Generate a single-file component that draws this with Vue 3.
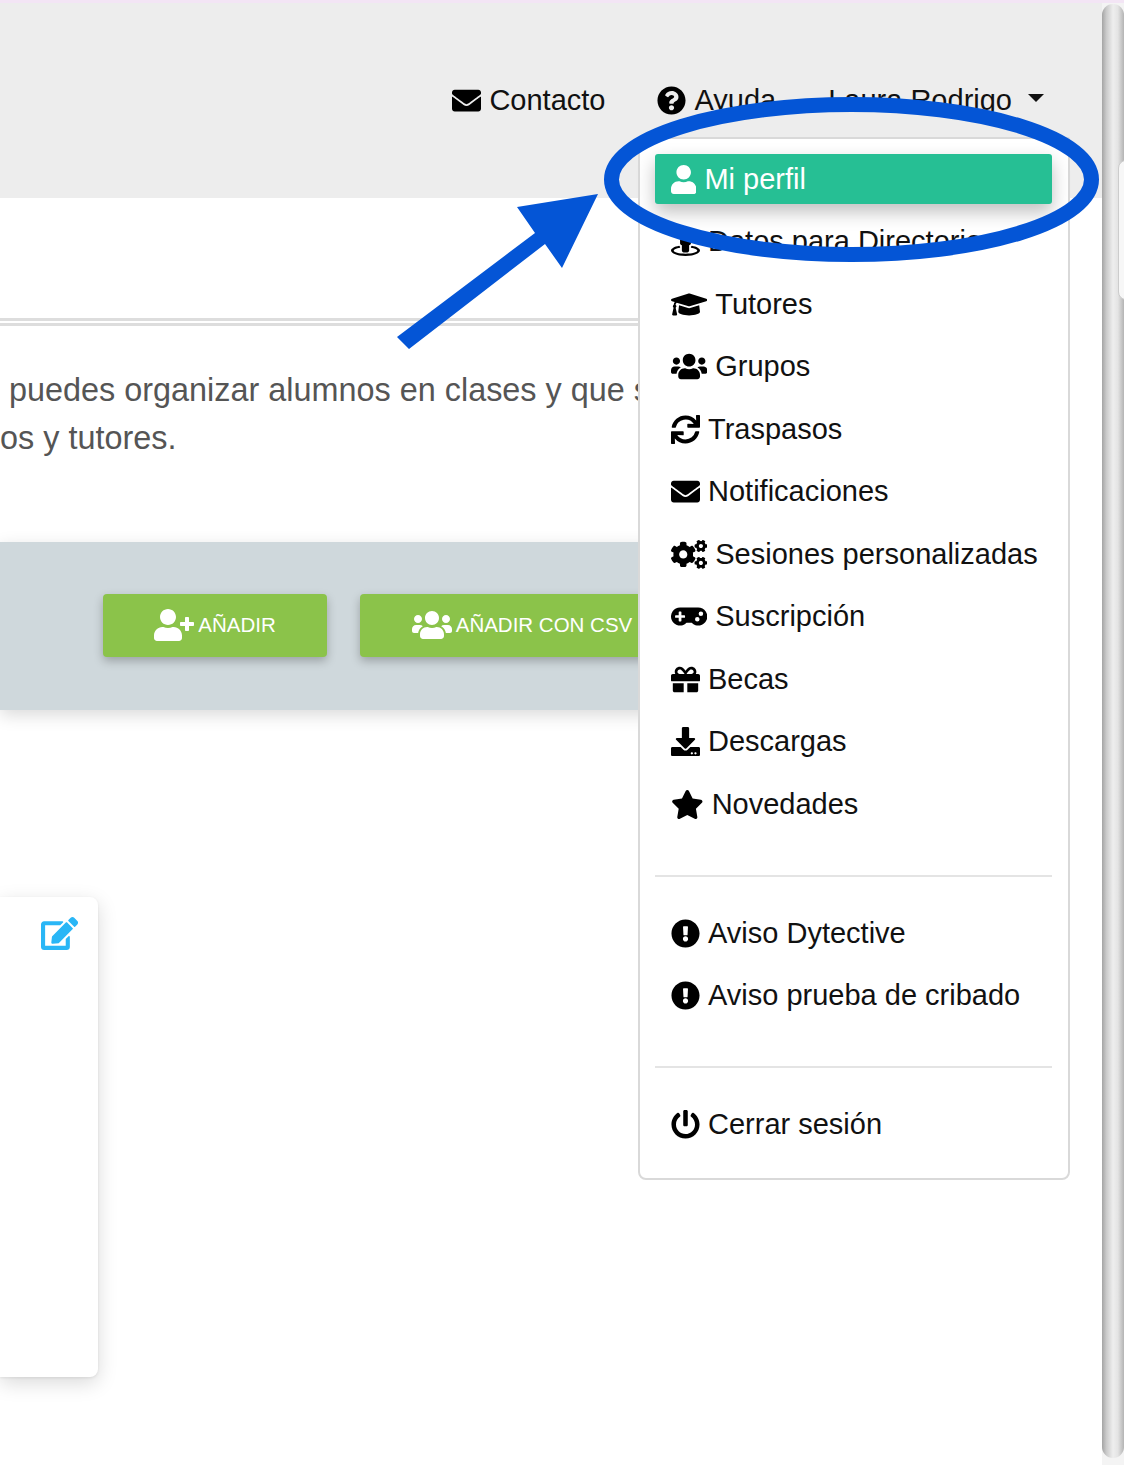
<template>
  <div class="page">
    <div class="top-strip"></div>
    <div class="body-row">
      <div class="main">
        <header class="topbar">
          <nav class="nav">
            <a class="nav-link">
              <svg class="icon" :viewBox="box('envelope')" :width="iconW('envelope')" height="29"><path :d="icons.envelope.d" /></svg>
              Contacto
            </a>
            <a class="nav-link">
              <svg class="icon" :viewBox="box('question')" :width="iconW('question')" height="29"><path :d="icons.question.d" /></svg>
              Ayuda
            </a>
            <a class="nav-link user-link">Laura Rodrigo <span class="caret"></span></a>
          </nav>
        </header>

        <div class="title-area"></div>
        <div class="double-line"></div>
        <div class="intro">
          <p class="intro-line">puedes organizar alumnos en clases y que s</p>
          <p class="intro-line second">pos y tutores.</p>
        </div>

        <section class="actions">
          <button class="green-btn first">
            <svg class="icon white" :viewBox="box('userPlus')" :width="btnW('userPlus')" height="32"><path :d="icons.userPlus.d" /></svg>
            AÑADIR
          </button>
          <button class="green-btn second">
            <svg class="icon white" :viewBox="box('users')" :width="btnW('users')" height="32"><path :d="icons.users.d" /></svg>
            AÑADIR CON CSV
          </button>
        </section>

        <div class="card">
          <svg class="icon blue" :viewBox="box('edit')" width="37.1" height="33"><path :d="icons.edit.d" /></svg>
        </div>
      </div>

      <div class="scrollbar">
        <div class="thumb"></div>
      </div>
    </div>

    <div class="dropdown">
      <template v-for="(group, g) in menu" :key="g">
        <hr v-if="g > 0" class="divider" />
        <a v-for="item in group" :key="item.label" class="menu-item" :class="{ active: item.active }">
          <svg class="icon" :viewBox="box(item.icon)" :width="iconW(item.icon)" height="29"><path :d="icons[item.icon].d" /></svg>
          <span>{{ item.label }}</span>
        </a>
      </template>
    </div>

    <div class="side-notch"></div>

    <!-- blue annotation drawn on top of the screenshot -->
    <svg class="annotation" width="1124" height="1465" viewBox="0 0 1124 1465">
      <ellipse cx="851.5" cy="179.5" rx="240" ry="75" fill="none" stroke="#0455d6" stroke-width="15" />
      <polygon fill="#0455d6" points="598,194 517,207 535,233 397,337 409,349 545,244 562,268" />
    </svg>
  </div>
</template>

<script setup>
const icons = {
  envelope: { w: 512, d: "M502.3 190.8c3.9-3.1 9.7-.2 9.7 4.7V400c0 26.5-21.5 48-48 48H48c-26.5 0-48-21.5-48-48V195.6c0-5 5.7-7.8 9.7-4.7 22.4 17.4 52.1 39.5 154.1 113.6 21.1 15.4 56.7 47.8 92.2 47.6 35.7.3 72-32.8 92.3-47.6 102-74.1 131.6-96.3 154-113.7zM256 320c23.2.4 56.6-29.2 73.4-41.4 132.7-96.3 142.8-104.7 173.4-128.7 5.8-4.5 9.2-11.5 9.2-18.9v-19c0-26.5-21.5-48-48-48H48C21.5 64 0 85.5 0 112v19c0 7.4 3.4 14.3 9.2 18.9 30.6 23.9 40.7 32.4 173.4 128.7 16.8 12.2 50.2 41.8 73.4 41.4z" },
  question: { w: 512, d: "M504 256c0 136.997-111.043 248-248 248S8 392.997 8 256C8 119.083 119.043 8 256 8s248 111.083 248 248zM262.655 90c-54.497 0-89.255 22.957-116.549 63.758-3.536 5.286-2.353 12.415 2.715 16.258l34.699 26.31c5.205 3.947 12.621 3.008 16.665-2.122 17.864-22.658 30.113-35.797 57.303-35.797 20.429 0 45.698 13.148 45.698 32.958 0 14.976-12.363 22.667-32.534 33.976C247.128 238.528 216 254.941 216 296v4c0 6.627 5.373 12 12 12h56c6.627 0 12-5.373 12-12v-1.333c0-28.462 83.186-29.647 83.186-106.667 0-58.002-60.165-102-116.531-102zM256 338c-25.365 0-46 20.635-46 46 0 25.364 20.635 46 46 46s46-20.636 46-46c0-25.365-20.635-46-46-46z" },
  user: { w: 448, d: "M224 256c70.7 0 128-57.3 128-128S294.7 0 224 0 96 57.3 96 128s57.3 128 128 128zm89.6 32h-16.7c-22.2 10.2-46.9 16-72.9 16s-50.6-5.8-72.9-16h-16.7C60.2 288 0 348.2 0 422.4V464c0 26.5 21.5 48 48 48h352c26.5 0 48-21.5 48-48v-41.6c0-74.2-60.2-134.4-134.4-134.4z" },
  street: { w: 512, d: "M367.9 329.76c-4.62 5.3-9.78 10.1-15.9 13.65v22.94c66.52 9.34 112 28.05 112 49.65 0 30.93-93.12 56-208 56S48 446.93 48 416c0-21.6 45.48-40.3 112-49.65v-22.94c-6.12-3.55-11.28-8.35-15.9-13.65C58.87 345.34 0 378.05 0 416c0 53.02 114.62 96 256 96s256-42.98 256-96c0-37.95-58.87-70.66-144.1-86.24zM256 128c35.35 0 64-28.65 64-64S291.35 0 256 0s-64 28.65-64 64 28.65 64 64 64zm-64 192v96c0 17.67 14.33 32 32 32h64c17.67 0 32-14.33 32-32v-96c17.67 0 32-14.33 32-32v-96c0-26.51-21.49-48-48-48h-11.8c-11.07 5.03-23.26 8-36.2 8s-25.13-2.97-36.2-8H208c-26.51 0-48 21.49-48 48v96c0 17.67 14.33 32 32 32z" },
  cap: { w: 640, d: "M622.34 153.2L343.4 67.5c-15.2-4.67-31.6-4.67-46.79 0L17.66 153.2c-23.54 7.23-23.54 38.36 0 45.59l48.63 14.94c-10.67 13.19-17.23 29.28-17.88 46.9C38.78 266.15 32 276.11 32 288c0 10.78 5.68 19.85 13.86 25.65L20.33 428.53C18.11 438.52 25.71 448 35.94 448h56.11c10.24 0 17.84-9.48 15.62-19.47L82.14 313.65C90.32 307.85 96 298.78 96 288c0-11.57-6.47-21.25-15.66-26.87.76-15.02 8.44-28.3 20.69-36.72L296.6 284.5c9.06 2.78 26.44 6.25 46.79 0l278.95-85.7c23.55-7.24 23.55-38.36 0-45.6zM352.79 315.09c-28.53 8.76-52.84 3.92-65.59 0l-145.02-44.55L128 384c0 35.35 85.96 64 192 64s192-28.65 192-64l-14.18-113.47-145.03 44.56z" },
  users: { w: 640, d: "M96 224c35.3 0 64-28.7 64-64s-28.7-64-64-64-64 28.7-64 64 28.7 64 64 64zm448 0c35.3 0 64-28.7 64-64s-28.7-64-64-64-64 28.7-64 64 28.7 64 64 64zm32 32h-64c-17.6 0-33.5 7.1-45.1 18.6 40.3 22.1 68.9 62 75.1 109.4h66c17.7 0 32-14.3 32-32v-32c0-35.3-28.7-64-64-64zm-256 0c61.9 0 112-50.1 112-112S381.9 32 320 32 208 82.1 208 144s50.1 112 112 112zm76.8 32h-8.3c-20.8 10-43.9 16-68.5 16s-47.6-6-68.5-16h-8.3C179.6 288 128 339.6 128 403.2V432c0 26.5 21.5 48 48 48h288c26.5 0 48-21.5 48-48v-28.8c0-63.6-51.6-115.2-115.2-115.2zm-223.7-13.4C161.5 263.1 145.6 256 128 256H64c-35.3 0-64 28.7-64 64v32c0 17.7 14.3 32 32 32h65.9c6.3-47.4 34.9-87.3 75.2-109.4z" },
  userPlus: { w: 640, d: "M624 208h-64v-64c0-8.8-7.2-16-16-16h-32c-8.8 0-16 7.2-16 16v64h-64c-8.8 0-16 7.2-16 16v32c0 8.8 7.2 16 16 16h64v64c0 8.8 7.2 16 16 16h32c8.8 0 16-7.2 16-16v-64h64c8.8 0 16-7.2 16-16v-32c0-8.8-7.2-16-16-16zm-400 48c70.7 0 128-57.3 128-128S294.7 0 224 0 96 57.3 96 128s57.3 128 128 128zm89.6 32h-16.7c-22.2 10.2-46.9 16-72.9 16s-50.6-5.8-72.9-16h-16.7C60.2 288 0 348.2 0 422.4V464c0 26.5 21.5 48 48 48h352c26.5 0 48-21.5 48-48v-41.6c0-74.2-60.2-134.4-134.4-134.4z" },
  sync: { w: 512, d: "M440.65 12.57l4 82.77A247.16 247.16 0 0 0 255.83 8C134.73 8 33.91 94.92 12.29 209.82A12 12 0 0 0 24.09 224h49.05a12 12 0 0 0 11.67-9.26 175.91 175.91 0 0 1 317-56.94l-101.46-4.86a12 12 0 0 0-12.57 12v47.41a12 12 0 0 0 12 12H500a12 12 0 0 0 12-12V12a12 12 0 0 0-12-12h-47.37a12 12 0 0 0-11.98 12.57zM255.83 432a175.61 175.61 0 0 1-146-77.8l101.8 4.87a12 12 0 0 0 12.57-12v-47.4a12 12 0 0 0-12-12H12a12 12 0 0 0-12 12V500a12 12 0 0 0 12 12h47.35a12 12 0 0 0 12-12.6l-4.15-82.57A247.17 247.17 0 0 0 255.83 504c121.11 0 221.93-86.92 243.55-201.82a12 12 0 0 0-11.8-14.18h-49.05a12 12 0 0 0-11.67 9.26A175.86 175.86 0 0 1 255.83 432z" },
  cogs: { w: 640, d: "M512.1 191l-8.2 14.3c-3 5.3-9.4 7.5-15.1 5.4-11.8-4.4-22.6-10.7-32.1-18.6-4.6-3.8-5.8-10.5-2.8-15.7l8.2-14.3c-6.9-8-12.3-17.3-15.9-27.4h-16.5c-6 0-11.2-4.3-12.2-10.3-2-12-2.1-24.6 0-37.1 1-6 6.2-10.4 12.2-10.4h16.5c3.6-10.1 9-19.4 15.9-27.4l-8.2-14.3c-3-5.2-1.9-11.9 2.8-15.7 9.5-7.9 20.4-14.2 32.1-18.6 5.7-2.1 12.1.1 15.1 5.4l8.2 14.3c10.5-1.9 21.2-1.9 31.7 0L552 6.3c3-5.3 9.4-7.5 15.1-5.4 11.8 4.4 22.6 10.7 32.1 18.6 4.6 3.8 5.8 10.5 2.8 15.7l-8.2 14.3c6.9 8 12.3 17.3 15.9 27.4h16.5c6 0 11.2 4.3 12.2 10.3 2 12 2.1 24.6 0 37.1-1 6-6.2 10.4-12.2 10.4h-16.5c-3.6 10.1-9 19.4-15.9 27.4l8.2 14.3c3 5.2 1.9 11.9-2.8 15.7-9.5 7.9-20.4 14.2-32.1 18.6-5.7 2.1-12.1-.1-15.1-5.4l-8.2-14.3c-10.4 1.9-21.2 1.9-31.7 0zm-10.5-58.8c38.5 29.6 82.4-14.3 52.8-52.8-38.5-29.7-82.4 14.3-52.8 52.8zM386.3 286.1l33.7 16.8c10.1 5.8 14.5 18.1 10.5 29.1-8.9 24.2-26.4 46.4-42.6 65.8-7.4 8.9-20.2 11.1-30.3 5.3l-29.1-16.8c-16 13.7-34.6 24.6-54.9 31.7v33.6c0 11.6-8.3 21.6-19.7 23.6-24.6 4.2-50.4 4.4-75.9 0-11.5-2-20-11.9-20-23.6V418c-20.3-7.2-38.9-18-54.9-31.7L74 403c-10 5.8-22.9 3.6-30.3-5.3-16.2-19.4-33.3-41.6-42.2-65.7-4-10.9.4-23.2 10.5-29.1l33.3-16.8c-3.9-20.9-3.9-42.4 0-63.4L12 205.8c-10.1-5.8-14.6-18.1-10.5-29 8.9-24.2 26-46.4 42.2-65.8 7.4-8.9 20.2-11.1 30.3-5.3l29.1 16.8c16-13.7 34.6-24.6 54.9-31.7V57.1c0-11.5 8.2-21.5 19.6-23.5 24.6-4.2 50.5-4.4 76-.1 11.5 2 20 11.9 20 23.6v33.6c20.3 7.2 38.9 18 54.9 31.7l29.1-16.8c10-5.8 22.9-3.6 30.3 5.3 16.2 19.4 33.2 41.6 42.1 65.8 4 10.9.1 23.2-10 29.1l-33.7 16.8c3.9 21 3.9 42.5 0 63.5zm-117.6 21.1c59.2-77-28.7-164.9-105.7-105.7-59.2 77 28.7 164.9 105.7 105.7zm243.4 182.7l-8.2 14.3c-3 5.3-9.4 7.5-15.1 5.4-11.8-4.4-22.6-10.7-32.1-18.6-4.6-3.8-5.8-10.5-2.8-15.7l8.2-14.3c-6.9-8-12.3-17.3-15.9-27.4h-16.5c-6 0-11.2-4.3-12.2-10.3-2-12-2.1-24.6 0-37.1 1-6 6.2-10.4 12.2-10.4h16.5c3.6-10.1 9-19.4 15.9-27.4l-8.2-14.3c-3-5.2-1.9-11.9 2.8-15.7 9.5-7.9 20.4-14.2 32.1-18.6 5.7-2.1 12.1.1 15.1 5.4l8.2 14.3c10.5-1.9 21.2-1.9 31.7 0l8.2-14.3c3-5.3 9.4-7.5 15.1-5.4 11.8 4.4 22.6 10.7 32.1 18.6 4.6 3.8 5.8 10.5 2.8 15.7l-8.2 14.3c6.9 8 12.3 17.3 15.9 27.4h16.5c6 0 11.2 4.3 12.2 10.3 2 12 2.1 24.6 0 37.1-1 6-6.2 10.4-12.2 10.4h-16.5c-3.6 10.1-9 19.4-15.9 27.4l8.2 14.3c3 5.2 1.9 11.9-2.8 15.7-9.5 7.9-20.4 14.2-32.1 18.6-5.7 2.1-12.1-.1-15.1-5.4l-8.2-14.3c-10.4 1.9-21.2 1.9-31.7 0zM501.6 431c38.5 29.6 82.4-14.3 52.8-52.8-38.5-29.6-82.4 14.3-52.8 52.8z" },
  gamepad: { w: 640, d: "M480.07 96H160a160 160 0 1 0 114.24 272h91.52A160 160 0 1 0 480.07 96zM248 268a12 12 0 0 1-12 12h-52v52a12 12 0 0 1-12 12h-24a12 12 0 0 1-12-12v-52H84a12 12 0 0 1-12-12v-24a12 12 0 0 1 12-12h52v-52a12 12 0 0 1 12-12h24a12 12 0 0 1 12 12v52h52a12 12 0 0 1 12 12zm216 76a40 40 0 1 1 40-40 40 40 0 0 1-40 40zm64-96a40 40 0 1 1 40-40 40 40 0 0 1-40 40z" },
  gift: { w: 512, d: "M32 448c0 17.7 14.3 32 32 32h160V320H32v128zm256 32h160c17.7 0 32-14.3 32-32V320H288v160zm192-320h-42.1c6.2-12.1 10.1-25.5 10.1-40 0-48.5-39.5-88-88-88-41.6 0-68.5 21.3-103 68.3-34.5-47-61.4-68.3-103-68.3-48.5 0-88 39.5-88 88 0 14.5 3.8 27.9 10.1 40H32c-17.7 0-32 14.3-32 32v80c0 8.8 7.2 16 16 16h480c8.8 0 16-7.2 16-16v-80c0-17.7-14.3-32-32-32zm-326.1 0c-22.1 0-40-17.9-40-40s17.9-40 40-40c19.9 0 34.6 3.3 86.1 80h-86.1zm206.1 0h-86.1c51.4-76.5 65.7-80 86.1-80 22.1 0 40 17.9 40 40s-17.9 40-40 40z" },
  download: { w: 512, d: "M216 0h80c13.3 0 24 10.7 24 24v168h87.7c17.8 0 26.7 21.5 14.1 34.1L269.7 378.3c-7.5 7.5-19.8 7.5-27.3 0L90.1 226.1c-12.6-12.6-3.7-34.1 14.1-34.1H192V24c0-13.3 10.7-24 24-24zm296 376v112c0 13.3-10.7 24-24 24H24c-13.3 0-24-10.7-24-24V376c0-13.3 10.7-24 24-24h146.7l49 49c20.1 20.1 52.5 20.1 72.6 0l49-49H488c13.3 0 24 10.7 24 24zm-124 88c0-11-9-20-20-20s-20 9-20 20 9 20 20 20 20-9 20-20zm64 0c0-11-9-20-20-20s-20 9-20 20 9 20 20 20 20-9 20-20z" },
  star: { w: 576, d: "M259.3 17.8L194 150.2 47.9 171.5c-26.2 3.8-36.7 36.1-17.7 54.6l105.7 103-25 145.5c-4.5 26.3 23.2 46 46.4 33.7L288 439.6l130.7 68.7c23.2 12.2 50.9-7.4 46.4-33.7l-25-145.5 105.7-103c19-18.5 8.5-50.8-17.7-54.6L382 150.2 316.7 17.8c-11.7-23.6-45.6-23.9-57.4 0z" },
  alert: { w: 512, d: "M504 256c0 136.997-111.043 248-248 248S8 392.997 8 256C8 119.083 119.043 8 256 8s248 111.083 248 248zm-248 50c-25.405 0-46 20.595-46 46s20.595 46 46 46 46-20.595 46-46-20.595-46-46-46zm-43.673-165.346l7.418 136c.347 6.364 5.609 11.346 11.982 11.346h48.546c6.373 0 11.635-4.982 11.982-11.346l7.418-136c.375-6.874-5.098-12.654-11.982-12.654h-63.383c-6.884 0-12.356 5.78-11.981 12.654z" },
  power: { w: 512, d: "M400 54.1c63 45 104 118.6 104 201.9 0 136.8-110.8 247.7-247.5 248C120 504.3 8.2 393 8 256.4 7.9 173.1 48.9 99.3 111.8 54.2c11.7-8.3 28-4.8 35 7.7L162.6 90c5.9 10.5 3.1 23.8-6.6 31-41.5 30.8-68 79.6-68 134.9-.1 92.3 74.5 168.1 168 168.1 91.6 0 168.6-74.2 168-169.1-.3-51.8-24.7-101.8-68.1-134-9.7-7.2-12.4-20.5-6.5-30.9l15.8-28.1c7-12.4 23.2-16.1 34.8-7.8zM296 264V24c0-13.3-10.7-24-24-24h-32c-13.3 0-24 10.7-24 24v240c0 13.3 10.7 24 24 24h32c13.3 0 24-10.7 24-24z" },
  edit: { w: 576, d: "M402.6 83.2l90.2 90.2c3.8 3.8 3.8 10 0 13.8L274.4 405.6l-92.8 10.3c-12.4 1.4-22.9-9.1-21.5-21.5l10.3-92.8L388.8 83.2c3.8-3.8 10-3.8 13.8 0zm162-22.9l-48.8-48.8c-15.2-15.2-39.9-15.2-55.2 0l-35.4 35.4c-3.8 3.8-3.8 10 0 13.8l90.2 90.2c3.8 3.8 10 3.8 13.8 0l35.4-35.4c15.2-15.3 15.2-40 0-55.2zM384 346.2V448H64V128h229.8c3.2 0 6.2-1.3 8.5-3.5l40-40c7.6-7.6 2.2-20.5-8.5-20.5H48C21.5 64 0 85.5 0 112v352c0 26.5 21.5 48 48 48h352c26.5 0 48-21.5 48-48V306.2c0-10.7-12.9-16-20.5-8.5l-40 40c-2.2 2.3-3.5 5.3-3.5 8.5z" },
};

const menu = [
  [
    { label: "Mi perfil", icon: "user", active: true },
    { label: "Datos para Directorio", icon: "street" },
    { label: "Tutores", icon: "cap" },
    { label: "Grupos", icon: "users" },
    { label: "Traspasos", icon: "sync" },
    { label: "Notificaciones", icon: "envelope" },
    { label: "Sesiones personalizadas", icon: "cogs" },
    { label: "Suscripción", icon: "gamepad" },
    { label: "Becas", icon: "gift" },
    { label: "Descargas", icon: "download" },
    { label: "Novedades", icon: "star" },
  ],
  [
    { label: "Aviso Dytective", icon: "alert" },
    { label: "Aviso prueba de cribado", icon: "alert" },
  ],
  [{ label: "Cerrar sesión", icon: "power" }],
];

const box = (name) => `0 0 ${icons[name].w} 512`;
const iconW = (name) => (icons[name].w / 512) * 29;
const btnW = (name) => (icons[name].w / 512) * 32;
</script>

<style>
html,
body {
  margin: 0;
  background: #fff;
}
</style>

<style scoped>
.page {
  position: relative;
  width: 1124px;
  height: 1465px;
  overflow: hidden;
  background: #fff;
  font-family: "Liberation Sans", Arial, sans-serif;
  color: #111;
}

.top-strip {
  height: 3px;
  background: #f3e5f5;
}

.body-row {
  display: flex;
  height: 1462px;
}

.main {
  flex: 1;
  min-width: 0;
  overflow: hidden;
}

.topbar {
  height: 195px;
  box-sizing: border-box;
  padding: 75px 58px 0 0;
  background: #ededed;
}

.nav {
  display: flex;
  justify-content: flex-end;
  gap: 52px;
}

.nav-link {
  display: flex;
  align-items: center;
  gap: 8px;
  font-size: 29px;
  line-height: 44px;
  white-space: nowrap;
}

.user-link {
  gap: 16px;
}

.caret {
  width: 0;
  height: 0;
  border-top: 8px solid #111;
  border-left: 8px solid transparent;
  border-right: 8px solid transparent;
  margin-bottom: 4px;
}

.icon {
  flex: none;
  display: block;
  fill: #000;
}

.icon.white {
  fill: #fff;
}

.icon.blue {
  fill: #29b6f6;
}

.title-area {
  height: 120px;
}

/* the rule and the grey panel stop under the open menu */
.double-line {
  width: 800px;
  border-top: 8px double #ddd;
}

.intro {
  height: 176px;
  box-sizing: border-box;
  padding-top: 40px;
  margin-bottom: 40px;
  color: #555;
  font-size: 32.4px;
  line-height: 48px;
  white-space: nowrap;
}

.intro-line {
  margin: 0 0 0 9px;
}

.intro-line.second {
  margin-left: -18px;
}

.actions {
  display: flex;
  gap: 33px;
  width: 800px;
  height: 168px;
  box-sizing: border-box;
  padding: 52px 0 0 103px;
  background: #cfd8dc;
  box-shadow: 0 5px 16px rgba(0, 0, 0, 0.15);
}

.green-btn {
  flex: none;
  display: flex;
  align-items: center;
  justify-content: center;
  gap: 4px;
  height: 63px;
  border: none;
  border-radius: 4px;
  padding: 0 0 2px;
  background: #8bc34a;
  color: #fff;
  font-family: inherit;
  font-size: 20.5px;
  box-shadow: 0 4px 10px rgba(0, 0, 0, 0.25);
}

.green-btn.first {
  width: 224px;
}

.green-btn.second {
  width: 324px;
}

.card {
  display: flex;
  justify-content: flex-end;
  width: 98px;
  height: 480px;
  box-sizing: border-box;
  margin-top: 187px;
  padding: 20px 20px 0 0;
  border-radius: 0 8px 8px 0;
  background: #fff;
  box-shadow: 0 6px 20px rgba(0, 0, 0, 0.15), 0 1px 3px rgba(0, 0, 0, 0.08);
}

.scrollbar {
  flex: none;
  width: 22px;
  padding-top: 1px;
  background: #f4f4f4;
}

.thumb {
  height: 1454px;
  border-radius: 11px;
  background: linear-gradient(90deg, #a4a4a4 0%, #cacaca 20%, #eeeeee 50%, #e4e4e4 72%, #b4b4b4 100%);
}

.side-notch {
  position: absolute;
  top: 160px;
  left: 1118px;
  width: 10px;
  height: 140px;
  box-sizing: border-box;
  border: 1px solid #ccc;
  border-radius: 8px 0 0 8px;
  background: #f7f7f7;
}

.dropdown {
  position: absolute;
  top: 137px;
  left: 638px;
  width: 432px;
  height: 1043px;
  box-sizing: border-box;
  padding: 15px 16px 15px 15px;
  background: #fff;
  border: 2px solid #d9d9d9;
  border-radius: 2px 2px 8px 8px;
}

.menu-item {
  display: flex;
  align-items: center;
  gap: 8px;
  height: 50px;
  margin-bottom: 12.5px;
  box-sizing: border-box;
  padding-left: 16px;
  border-radius: 3px;
  font-size: 29px;
  white-space: nowrap;
}

.menu-item.active {
  background: #26bf94;
  color: #fff;
  box-shadow: 0 8px 18px rgba(0, 0, 0, 0.25);
}

.menu-item.active .icon {
  fill: #fff;
}

/* item margin collapses into this one */
.divider {
  height: 2px;
  margin: 45.5px 0 31.5px;
  border: none;
  background: #e4e4e4;
}

.annotation {
  position: absolute;
  top: 0;
  left: 0;
  pointer-events: none;
}
</style>
